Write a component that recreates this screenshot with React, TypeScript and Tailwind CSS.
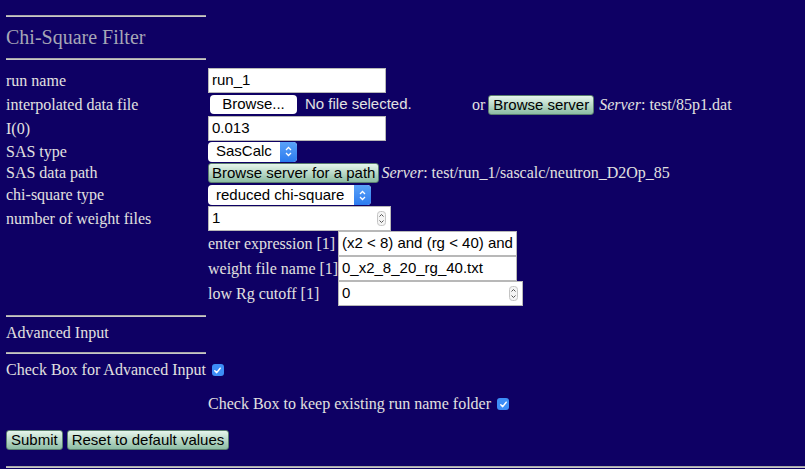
import React from "react";

const Hr = ({ full }: { full?: boolean }) => (
  <div className={full ? "h-[2px] w-full bg-[#a8a8a8] border-b border-[#c8c8c8]" : "h-[2px] w-[200px] bg-[#a8a8a8] border-b border-[#c8c8c8]"} />
);

const GreenButton = ({ children, className = "" }: { children: React.ReactNode; className?: string }) => (
  <button
    className={
      "h-[20px] px-[4px] whitespace-nowrap shrink-0 rounded-[3px] border border-[#5b7f6f] bg-gradient-to-b from-[#e6f5ec] to-[#8dbca4] text-black text-[15px] leading-[18px] font-['Liberation_Sans'] " +
      className
    }
  >
    {children}
  </button>
);

const TextInput = ({ value, w }: { value: string; w: string }) => (
  <div className={"h-[25px] shrink-0 bg-white border border-[#b8b8b8] flex items-center pl-[3px] text-black text-[15px] whitespace-nowrap overflow-hidden font-['Liberation_Sans'] " + w}>
    {value}
  </div>
);

const Spinner = () => (
  <svg width="9" height="15" viewBox="0 0 9 15" className="mr-[4px]">
    <rect x="0.5" y="0.5" width="8" height="14" rx="3" fill="#f4f4f4" stroke="#c4c4c4" />
    <path d="M2.5 5.5 L4.5 3.5 L6.5 5.5" stroke="#555" strokeWidth="1" fill="none" />
    <path d="M2.5 9.5 L4.5 11.5 L6.5 9.5" stroke="#555" strokeWidth="1" fill="none" />
  </svg>
);

const NumberInput = ({ value, w }: { value: string; w: string }) => (
  <div className={"h-[25px] shrink-0 bg-white border border-[#b8b8b8] flex items-center justify-between pl-[3px] text-black text-[15px] font-['Liberation_Sans'] " + w}>
    <span>{value}</span>
    <Spinner />
  </div>
);

const Select = ({ value, w }: { value: string; w: string }) => (
  <div className={"h-[20px] shrink-0 bg-white rounded-[4px] flex items-center justify-between text-black text-[15px] whitespace-nowrap font-['Liberation_Sans'] " + w}>
    <span className="pl-[8px]">{value}</span>
    <span className="h-[20px] w-[17px] rounded-r-[4px] bg-gradient-to-b from-[#5aa2f8] to-[#2b7bef] flex items-center justify-center">
      <svg width="9" height="13" viewBox="0 0 9 13">
        <path d="M2 5 L4.5 2.5 L7 5" stroke="white" strokeWidth="1.3" fill="none" />
        <path d="M2 8 L4.5 10.5 L7 8" stroke="white" strokeWidth="1.3" fill="none" />
      </svg>
    </span>
  </div>
);

const Check = () => (
  <span className="inline-flex w-[12px] h-[12px] rounded-[3px] bg-[#3d8ef7] items-center justify-center align-middle">
    <svg width="9" height="9" viewBox="0 0 9 9">
      <path d="M1.8 4.8 L3.7 6.6 L7.2 2.2" stroke="white" strokeWidth="1.5" fill="none" strokeLinecap="round" strokeLinejoin="round" />
    </svg>
  </span>
);

const Row = ({ label, h, children }: { label: string; h: string; children: React.ReactNode }) => (
  <div className={"flex items-center whitespace-nowrap " + h}>
    <div className="w-[202px] shrink-0">{label}</div>
    <div className="flex items-center">{children}</div>
  </div>
);

const SubRow = ({ label, h, children }: { label: string; h: string; children: React.ReactNode }) => (
  <div className={"flex items-center whitespace-nowrap " + h}>
    <div className="w-[202px] shrink-0" />
    <div className="w-[130px] shrink-0">{label}</div>
    {children}
  </div>
);

export default function App() {
  return (
    <div className="min-h-screen w-full bg-[#0e0064] pl-[6px] pt-[15px] font-['Liberation_Serif'] text-[16px] text-[#e2e0e0] overflow-hidden">
      <Hr />
      <div className="h-[41px] flex items-center pb-[2px] text-[20px] text-[#a6a6b6]">Chi-Square Filter</div>
      <Hr />
      <div className="mt-[8px]">
        <Row label="run name" h="h-[25px]">
          <TextInput value="run_1" w="w-[178px]" />
        </Row>
        <Row label="interpolated data file" h="h-[23px]">
          <div className="w-[264px] flex items-center">
            <div className="ml-[2px] w-[87px] h-[19px] bg-white rounded-[4px] flex items-center justify-center text-black text-[15px] font-['Liberation_Sans']">
              Browse...
            </div>
            <span className="ml-[8px] text-[15px] font-['Liberation_Sans'] text-[#e2e2e2]">No file selected.</span>
          </div>
          <span className="mr-[3px]">or</span>
          <GreenButton>Browse server</GreenButton>
          <span className="ml-[5px]">
            <i>Server</i>: test/85p1.dat
          </span>
        </Row>
        <Row label="I(0)" h="h-[25px]">
          <TextInput value="0.013" w="w-[178px]" />
        </Row>
        <Row label="SAS type" h="h-[21px]">
          <Select value="SasCalc" w="w-[89px]" />
        </Row>
        <Row label="SAS data path" h="h-[22px]">
          <GreenButton className="!px-[3px]">Browse server for a path</GreenButton>
          <span className="ml-[2px]">
            <i>Server</i>: test/run_1/sascalc/neutron_D2Op_85
          </span>
        </Row>
        <Row label="chi-square type" h="h-[22px]">
          <Select value="reduced chi-square" w="w-[163px]" />
        </Row>
        <Row label="number of weight files" h="h-[25px]">
          <NumberInput value="1" w="w-[183px]" />
        </Row>
        <SubRow label="enter expression [1]" h="h-[25px]">
          <TextInput value="(x2 < 8) and (rg < 40) and" w="w-[179px]" />
        </SubRow>
        <SubRow label="weight file name [1]" h="h-[25px]">
          <TextInput value="0_x2_8_20_rg_40.txt" w="w-[179px]" />
        </SubRow>
        <SubRow label="low Rg cutoff [1]" h="h-[25px]">
          <NumberInput value="0" w="w-[185px]" />
        </SubRow>
      </div>
      <div className="mt-[9px]">
        <Hr />
      </div>
      <div className="h-[35px] flex items-center pb-[4px]">Advanced Input</div>
      <Hr />
      <div className="h-[32px] flex items-center whitespace-nowrap">
        Check Box for Advanced Input
        <span className="ml-[6px] flex">
          <Check />
        </span>
      </div>
      <div className="mt-[2px] h-[32px] flex items-center pl-[202px] whitespace-nowrap">
        Check Box to keep existing run name folder
        <span className="ml-[6px] flex">
          <Check />
        </span>
      </div>
      <div className="mt-[10px] flex gap-[4px]">
        <GreenButton>Submit</GreenButton>
        <GreenButton>Reset to default values</GreenButton>
      </div>
      <div className="mt-[16px]">
        <Hr full />
      </div>
    </div>
  );
}
